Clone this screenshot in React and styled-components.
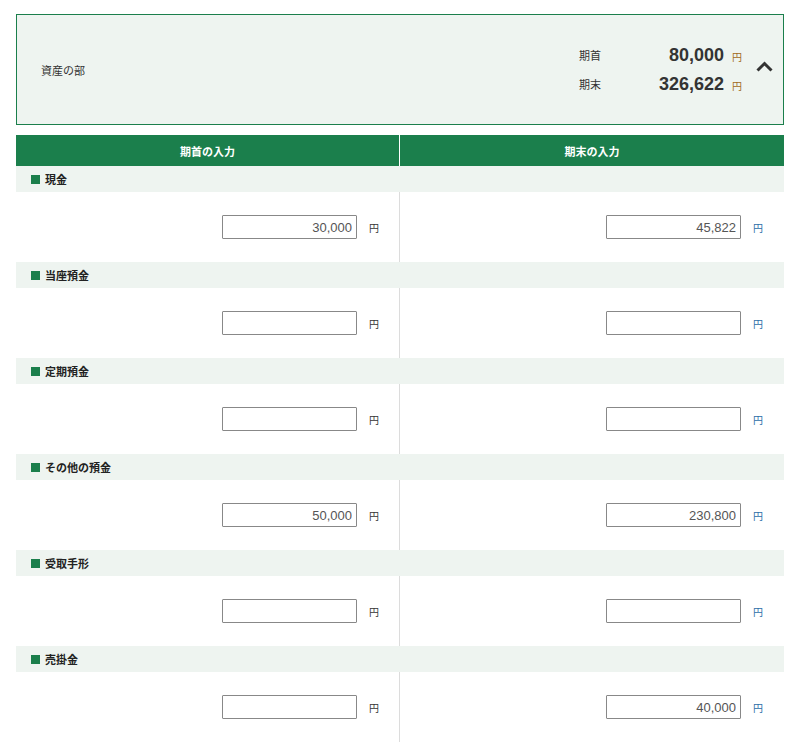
import React from "react";
import styled, { createGlobalStyle } from "styled-components";

const GREEN = "#1b7f4c";
const LIGHT = "#eef4f0";

const Global = createGlobalStyle`
  html, body { margin: 0; padding: 0; background: #fff; }
  body { font-family: "Noto Sans CJK JP", "Liberation Sans", sans-serif; color: #333; }
  * { box-sizing: border-box; }
`;

const Page = styled.div`
  padding: 14px 16px 0;
  width: 800px;
`;

const Summary = styled.div`
  height: 111px;
  border: 1px solid ${GREEN};
  background: ${LIGHT};
  display: flex;
  align-items: center;
  padding: 0 10px 0 24px;
`;

const SummaryTitle = styled.div`
  flex: 1;
  font-size: 11px;
  color: #333;
`;

const Totals = styled.div`
  display: grid;
  grid-template-columns: 60px 85px auto;
  row-gap: 7px;
  align-items: center;
`;

const TotalLabel = styled.div`
  font-size: 11px;
  color: #333;
`;

const TotalValue = styled.div`
  font-family: "Liberation Sans", Arial, sans-serif;
  font-size: 18px;
  font-weight: 700;
  color: #333;
  text-align: right;
  line-height: 22px;
`;

const TotalYen = styled.div`
  font-size: 10px;
  color: #a06a1a;
  padding-left: 8px;
  padding-top: 3px;
`;

const Toggle = styled.div`
  margin-left: 14px;
  margin-bottom: 6px;
  width: 17px;
  display: flex;
  align-items: center;
`;

const Table = styled.div`
  margin-top: 10px;
`;

const HeadRow = styled.div`
  display: grid;
  grid-template-columns: 383px 1fr;
  column-gap: 1px;
  background: #fff;
  height: 31px;
`;

const HeadCell = styled.div`
  background: ${GREEN};
  color: #fff;
  font-size: 11px;
  font-weight: 700;
  display: flex;
  align-items: center;
  justify-content: center;
`;

const SectionHead = styled.div`
  height: 26px;
  background: ${LIGHT};
  display: flex;
  align-items: center;
  padding-left: 15px;
  font-size: 11px;
  font-weight: 700;
  color: #222;
`;

const Square = styled.span`
  width: 9px;
  height: 9px;
  background: ${GREEN};
  margin-right: 5px;
`;

const InputRow = styled.div`
  display: grid;
  grid-template-columns: 383px 1px 1fr;
  height: 70px;
`;

const Divider = styled.div`
  background: #dcdcdc;
`;

const Cell = styled.div`
  display: flex;
  align-items: center;
  justify-content: flex-end;
  padding-right: ${(p) => p.$pr}px;
`;

const Field = styled.input`
  width: 135px;
  height: 24px;
  border: 1px solid #888;
  border-radius: 1px;
  padding: 0 4px;
  text-align: right;
  font-family: "Liberation Sans", Arial, sans-serif;
  font-size: 13px;
  color: #555;
  background: #fff;
  outline: none;
`;

const Yen = styled.span`
  font-size: 10px;
  color: ${(p) => p.$c};
  margin-left: 12px;
`;

const rows = [
  { name: "現金", a: "30,000", b: "45,822" },
  { name: "当座預金", a: "", b: "" },
  { name: "定期預金", a: "", b: "" },
  { name: "その他の預金", a: "50,000", b: "230,800" },
  { name: "受取手形", a: "", b: "" },
  { name: "売掛金", a: "", b: "40,000" },
];

export default function App() {
  return (
    <>
      <Global />
      <Page>
        <Summary>
          <SummaryTitle>資産の部</SummaryTitle>
          <Totals>
            <TotalLabel>期首</TotalLabel>
            <TotalValue>80,000</TotalValue>
            <TotalYen>円</TotalYen>
            <TotalLabel>期末</TotalLabel>
            <TotalValue>326,622</TotalValue>
            <TotalYen>円</TotalYen>
          </Totals>
          <Toggle>
            <svg width="17" height="11" viewBox="0 0 17 11">
              <path d="M1.5 9.5 L8.5 2.5 L15.5 9.5" fill="none" stroke="#333" strokeWidth="3" />
            </svg>
          </Toggle>
        </Summary>
        <Table>
          <HeadRow>
            <HeadCell>期首の入力</HeadCell>
            <HeadCell>期末の入力</HeadCell>
          </HeadRow>
          {rows.map((r) => (
            <React.Fragment key={r.name}>
              <SectionHead>
                <Square />
                {r.name}
              </SectionHead>
              <InputRow>
                <Cell $pr={20}>
                  <Field defaultValue={r.a} />
                  <Yen $c="#333">円</Yen>
                </Cell>
                <Divider />
                <Cell $pr={21}>
                  <Field defaultValue={r.b} />
                  <Yen $c="#2b6ea8">円</Yen>
                </Cell>
              </InputRow>
            </React.Fragment>
          ))}
        </Table>
      </Page>
    </>
  );
}
